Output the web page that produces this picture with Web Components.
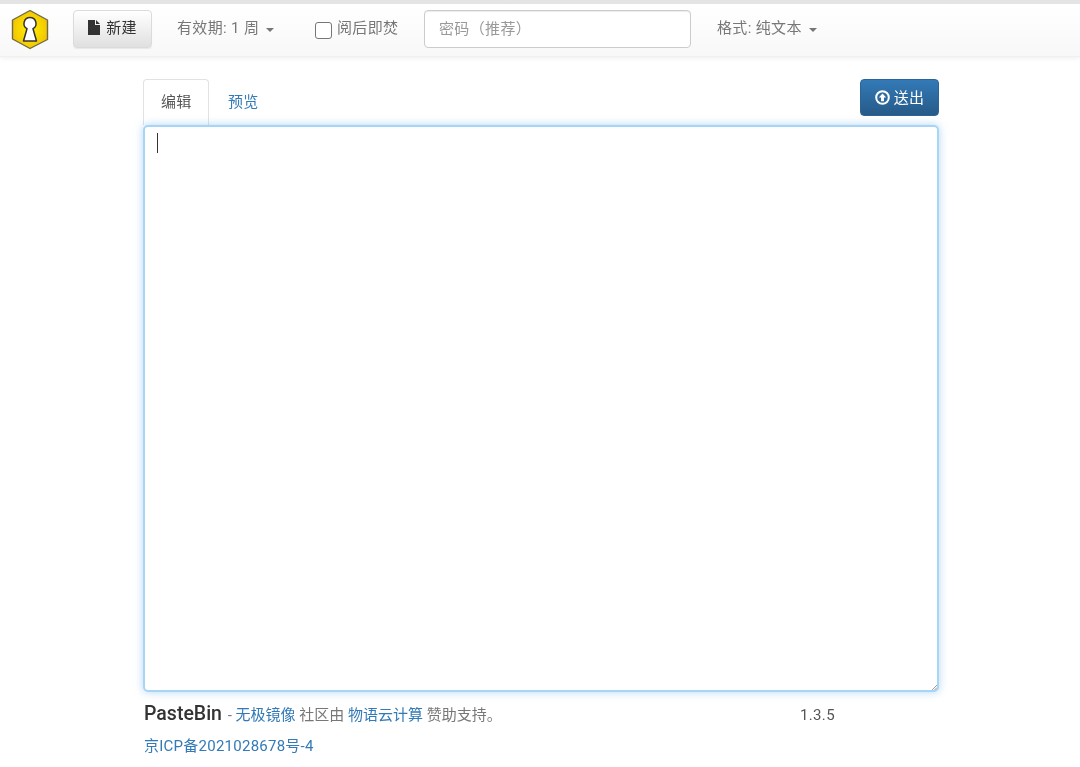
<!DOCTYPE html>
<html lang="zh">
<head>
<meta charset="utf-8">
<title>PasteBin</title>
<style>
	html, body { margin: 0; padding: 0; background: #fff; }
	body {
		font: 15px/20px Roboto, "Noto Sans CJK SC", sans-serif;
		letter-spacing: .35px;
		color: #333;
		height: 767px;
		overflow: hidden;
	}
	/* the reference photo is slightly soft */
	paste-nav, paste-editor, paste-footer { filter: blur(.5px); }
</style>
</head>
<body>
<paste-nav></paste-nav>
<paste-editor></paste-editor>
<paste-footer></paste-footer>

<script>
/* Top navigation bar */
class PasteNav extends HTMLElement {
	constructor() {
		super();
		this.attachShadow({ mode: "open" });
		this.shadowRoot.innerHTML = `
      <style>
        :host {
          display: flex;
          align-items: flex-start;
          box-sizing: border-box;
          height: 57px;
          border-top: 4px solid #e4e4e4;
          background: linear-gradient(to bottom, #fff 0, #f8f8f8 100%);
          border-bottom: 1px solid #f0f0f0;
          box-shadow: 0 1px 5px rgba(0,0,0,.07);
          color: #777;
          position: relative;
        }
        .logo { display: block; margin: 5px 0 0 11px; width: 38px; height: 41px; flex: none; }
        .new {
          display: flex; align-items: center; justify-content: center; gap: 6px;
          box-sizing: border-box;
          width: 79px; height: 38px; margin: 6px 0 0 24px;
          border: 1px solid #dbdbdb; border-radius: 4px;
          background: linear-gradient(to bottom, #fff 0, #e0e0e0 100%);
          box-shadow: 0 1px 1px rgba(0,0,0,.07);
          color: #333;
        }
        .new span { margin-top: -2px; }
        .item { margin-top: 14px; height: 20px; white-space: nowrap; display: flex; align-items: center; }
        .expire { margin-left: 25px; width: 138px; }
        .burn { width: 109px; }
        .burn input {
          appearance: none; box-sizing: border-box;
          width: 17px; height: 17px; margin: 4px 5px 0 0;
          border: 1.5px solid #767676; border-radius: 3px; background: #fff;
        }
        .pw {
          box-sizing: border-box; width: 267px; height: 38px; margin: 6px 0 0 0;
          border: 1px solid #ccc; border-radius: 4px; background: #fff;
          padding: 0 14px; color: #999; display: flex; align-items: center;
          box-shadow: inset 0 1px 1px rgba(0,0,0,.075);
        }
        .format { margin-left: 26px; }
        .caret {
          display: inline-block; width: 0; height: 0; margin-left: 7px; margin-top: 3px;
          border-top: 4px solid #777; border-left: 4px solid transparent; border-right: 4px solid transparent;
        }
      </style>
      <svg class="logo" viewBox="0 0 38 41" aria-hidden="true">
        <defs>
          <radialGradient id="gold" cx="50%" cy="50%" r="55%">
            <stop offset="0" stop-color="#fff200"/>
            <stop offset="1" stop-color="#f2c200"/>
          </radialGradient>
        </defs>
        <path d="M19 1.500 36.500 11v19.500L19 39.500 1.500 30V11Z" fill="url(#gold)" stroke="#6d6a4a" stroke-width="1.400" stroke-linejoin="round"/>
        <path d="M19 8.500a6 6 0 0 1 3 11.200L25.500 32h-13L16 19.700a6 6 0 0 1 3-11.200Z" fill="#fff" stroke="#333" stroke-width="1.500" stroke-linejoin="round"/>
      </svg>
      <div class="new">
        <svg width="12" height="15" viewBox="0 0 12 15" style="margin-top:-3px" aria-hidden="true"><path d="M0 0h7v5h5v10H0Z M8 0l4 4H8Z" fill="#333"/></svg>
        <span>新建</span>
      </div>
      <div class="item expire">有效期: 1 周<span class="caret"></span></div>
      <label class="item burn"><input type="checkbox">阅后即焚</label>
      <div class="pw">密码（推荐）</div>
      <div class="item format">格式: 纯文本<span class="caret"></span></div>
    `;
	}
}

/* Tabs, send button and the text area */
class PasteEditor extends HTMLElement {
	constructor() {
		super();
		this.attachShadow({ mode: "open" });
		this.shadowRoot.innerHTML = `
      <style>
        :host {
          display: block;
          box-sizing: border-box;
          width: 796px;
          margin: 22px 0 0 143px;
        }
        .head { display: flex; align-items: flex-start; height: 46px; }
        .tab {
          box-sizing: border-box; height: 46px; padding: 12px 16px 0 17px;
          border: 1px solid transparent; border-bottom: 0;
          border-radius: 4px 4px 0 0;
        }
        .tab.active { width: 66px; border-color: #e2e2e2; color: #555; background: #fff; }
        .tab.link { color: #337ab7; padding-left: 18px; }
        .send {
          display: flex; align-items: center; justify-content: center; gap: 4px;
          box-sizing: border-box;
          width: 79px; height: 37px; margin: 0 0 0 auto;
          border: 1px solid #2b6496; border-radius: 4px;
          background: linear-gradient(to bottom, #337ab7 0, #265a88 100%);
          color: #fff;
        }
        .area {
          box-sizing: border-box; width: 796px; height: 567px; padding: 6px 12px;
          border: 2px solid #a8d5f7; border-radius: 5px; background: #fff;
          box-shadow: 0 0 9px rgba(102,175,233,.5);
          position: relative;
        }
        .cursor { width: 1px; height: 20px; background: #333; }
        .grip { position: absolute; right: 0; bottom: 0; }
      </style>
      <div class="head">
        <div class="tab active">编辑</div>
        <div class="tab link">预览</div>
        <div class="send">
          <svg width="15" height="15" viewBox="0 0 15 15" aria-hidden="true">
            <circle cx="7.500" cy="7.500" r="6.300" fill="none" stroke="#fff" stroke-width="2"/>
            <path d="M7.500 3.400 11.200 7.500H9V11.300H6V7.500H3.800Z" fill="#fff"/>
          </svg>
          <span>送出</span>
        </div>
      </div>
      <div class="area">
        <div class="cursor"></div>
        <svg class="grip" width="5" height="5" viewBox="0 0 6 6" aria-hidden="true"><path d="M0 6 6 0M3 6 6 3" stroke="#888" stroke-width="1" fill="none"/></svg>
      </div>
    `;
	}
}

/* Credits, version number and the ICP line */
class PasteFooter extends HTMLElement {
	constructor() {
		super();
		this.attachShadow({ mode: "open" });
		this.shadowRoot.innerHTML = `
      <style>
        :host {
          display: block;
          box-sizing: border-box;
          width: 796px;
          margin: 12px 0 0 144px;
          color: #777;
        }
        a { color: #337ab7; text-decoration: none; }
        .row { display: flex; align-items: baseline; height: 26px; }
        .credits { width: 656px; white-space: nowrap; letter-spacing: 0; }
        .brand { font-size: 19.500px; font-weight: 500; margin-right: 2px; color: #333; }
        .version { color: #555; }
        .icp { margin-top: 6px; display: block; letter-spacing: .25px; }
      </style>
      <div class="row">
        <div class="credits"><span class="brand">PasteBin</span> - <a>无极镜像</a> 社区由 <a>物语云计算</a> 赞助支持。</div>
        <div class="version">1.3.5</div>
      </div>
      <a class="icp">京ICP备2021028678号-4</a>
    `;
	}
}

customElements.define("paste-nav", PasteNav);
customElements.define("paste-editor", PasteEditor);
customElements.define("paste-footer", PasteFooter);
</script>
</body>
</html>
